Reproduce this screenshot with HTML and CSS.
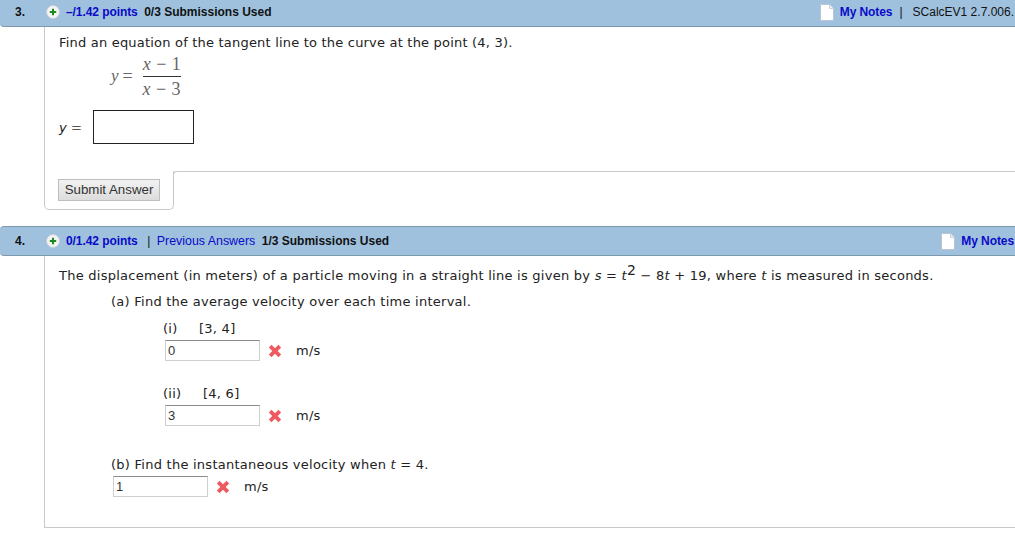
FILE: index.html
```html
<!DOCTYPE html>
<html lang="en">
<head>
<meta charset="utf-8">
<title>Questions</title>
<link rel="stylesheet" href="styles.css">
</head>
<body>
<section class="question first">
  <header class="qhead qhead-first">
    <span class="num">3.</span>
    <svg class="plus" viewBox="0 0 14 14"><circle cx="7" cy="7" r="6.5" fill="#f3f3f3" stroke="#c4cfd8"/><path d="M7 3.8v6.4M3.8 7h6.4" stroke="#1c8a1c" stroke-width="2"/></svg>
    <span class="pts">–/1.42 points</span>
    <span class="subs">0/3 Submissions Used</span>
    <span class="right">
      <svg class="note" viewBox="0 0 14 17"><path d="M.5.5h9l4 4v12H.5z" fill="#fff" stroke="#b9c6d2"/><path d="M9.5.5v4h4" fill="#eee" stroke="#ccd4db"/></svg>
      <span class="pts notes">My Notes</span>
      <span class="bar">|</span>
      <span class="ref">SCalcEV1 2.7.006.</span>
    </span>
  </header>
  <div class="qbody q3">
    <p class="text narrow">Find an equation of the tangent line to the curve at the point (4, 3).</p>
    <div class="math">
      <i>y</i><span class="eq">=</span>
      <span class="frac"><span class="top"><i>x</i> − 1</span><span class="bot"><i>x</i> − 3</span></span>
    </div>
    <div class="answer-row"><i>y</i><span class="eqs">=</span><span class="bigbox"></span></div>
  </div>
  <div class="foot">
    <div class="foot-left"><button class="submit" type="button">Submit Answer</button></div>
    <div class="foot-right"></div>
  </div>
</section>

<section class="question second">
  <header class="qhead">
    <span class="num">4.</span>
    <svg class="plus" viewBox="0 0 14 14"><circle cx="7" cy="7" r="6.5" fill="#f3f3f3" stroke="#c4cfd8"/><path d="M7 3.8v6.4M3.8 7h6.4" stroke="#1c8a1c" stroke-width="2"/></svg>
    <span class="pts">0/1.42 points</span>
    <span class="bar bar2">|</span>
    <span class="prev">Previous Answers</span>
    <span class="subs">1/3 Submissions Used</span>
    <span class="right">
      <svg class="note" viewBox="0 0 14 17"><path d="M.5.5h9l4 4v12H.5z" fill="#fff" stroke="#b9c6d2"/><path d="M9.5.5v4h4" fill="#eee" stroke="#ccd4db"/></svg>
      <span class="pts notes">My Notes</span>
    </span>
  </header>
  <div class="qbody q4">
    <p class="text">The displacement (in meters) of a particle moving in a straight line is given by <i>s</i> = <i>t</i><sup>2</sup> − 8<i>t</i> + 19, where <i>t</i> is measured in seconds.</p>
    <p class="text part">(a) Find the average velocity over each time interval.</p>
    <div class="sub">
      <div class="sublabel"><span class="roman">(i)</span><span>[3, 4]</span></div>
      <div class="resp">
        <span class="field">0</span>
        <svg class="x" viewBox="0 0 14 14"><path d="M2.2 2.2l9.6 9.6M11.8 2.2l-9.6 9.6" stroke="#ee5a5f" stroke-width="3.8"/></svg>
        <span class="unit">m/s</span>
      </div>
    </div>
    <div class="sub sub2">
      <div class="sublabel"><span class="roman">(ii)</span><span>[4, 6]</span></div>
      <div class="resp">
        <span class="field">3</span>
        <svg class="x" viewBox="0 0 14 14"><path d="M2.2 2.2l9.6 9.6M11.8 2.2l-9.6 9.6" stroke="#ee5a5f" stroke-width="3.8"/></svg>
        <span class="unit">m/s</span>
      </div>
    </div>
    <p class="text part partb">(b) Find the instantaneous velocity when <i>t</i> = 4.</p>
    <div class="resp respb">
      <span class="field">1</span>
      <svg class="x" viewBox="0 0 14 14"><path d="M2.2 2.2l9.6 9.6M11.8 2.2l-9.6 9.6" stroke="#ee5a5f" stroke-width="3.8"/></svg>
      <span class="unit">m/s</span>
    </div>
  </div>
</section>
</body>
</html>
```
FILE: styles.css
```css
html, body { margin: 0; padding: 0; background: #fff; overflow: hidden; }
body { width: 1015px; height: 553px; font-family: "DejaVu Sans", Verdana, sans-serif; font-size: 13px; color: #222; letter-spacing: 0.25px; }
p { margin: 0; }

.qhead {
  box-sizing: border-box;
  height: 30px;
  display: flex;
  align-items: center;
  background: #9fc1de;
  border-top: 1px solid #7d99ae;
  border-bottom: 1px solid #7d99ae;
  border-radius: 0 0 0 4px;
  font-family: "Liberation Sans", Arial, sans-serif;
  font-size: 12px;
  font-weight: bold;
  color: #111;
  white-space: nowrap;
  letter-spacing: 0;
}
.qhead-first { height: 27px; border-top: 0; padding-bottom: 2px; }
.second .qhead { border-radius: 4px 0 0 4px; }
.second { margin-top: 16px; }

.num { width: 46px; padding-left: 15px; box-sizing: border-box; }
.plus { width: 14px; height: 14px; margin-right: 6px; }
.pts { color: #0a0ac8; letter-spacing: -0.08px; }
.subs { margin-left: 6.5px; }
.bar { font-weight: normal; }
.bar2 { margin-left: 9.5px; }
.prev { margin-left: 6.5px; font-weight: normal; font-size: 12.4px; color: #0a0ac8; }
.right { margin-left: auto; margin-right: 1px; display: flex; align-items: center; }
.second .right { margin-right: 0; }
.note { width: 14px; height: 17px; margin-right: 6px; }
.notes { margin-right: 1px; }
.right .bar { margin-left: 6px; }
.ref { margin-left: 10px; font-weight: normal; }

.qbody { margin-left: 44px; border-left: 1px solid #c8c8c8; padding-left: 14px; }
.q3 { height: 144px; box-sizing: border-box; padding-top: 8px; }
.text { line-height: 16px; }
.narrow { letter-spacing: 0.2px; }

.math {
  display: flex;
  align-items: center;
  margin: 4px 0 0 52px;
  font-family: "Liberation Serif", serif;
  font-size: 17px;
  color: #666;
  height: 42px;
  letter-spacing: 0;
}
.eq { margin: 0 10px 0 4px; font-size: 18px; }
.frac { display: flex; flex-direction: column; align-items: center; text-align: center; width: 38px; font-size: 18px; letter-spacing: 0.5px; white-space: nowrap; }
.top { border-bottom: 1px solid #333; width: 100%; padding-bottom: 3px; line-height: 18px; }
.bot { padding-top: 3px; line-height: 18px; }

.answer-row { display: flex; align-items: center; margin-top: 13px; height: 34px; font-size: 13px; }
.eqs { margin-left: 4px; color: #555; }
.bigbox { box-sizing: border-box; width: 101px; height: 34px; margin-left: 11px; border: 1px solid #222; background: #fff; }

.foot { display: flex; }
.foot-left {
  box-sizing: border-box;
  width: 130px;
  height: 39px;
  margin-left: 44px;
  padding: 8px 0 0 13px;
  border: 1px solid #c8c8c8;
  border-top: 0;
  border-radius: 0 0 5px 5px;
}
.foot-right { flex: 1; margin-left: -1px; height: 20px; border-top: 1px solid #c8c8c8; border-left: 1px solid #c8c8c8; border-radius: 4px 0 0 0; }
.submit {
  box-sizing: border-box;
  width: 102px;
  height: 22px;
  padding: 0 0 2px;
  font-family: "Liberation Sans", Arial, sans-serif;
  font-size: 13.3px;
  color: #333;
  background: linear-gradient(#f2f2f2, #dcdcdc);
  border: 1px solid #bdbdbd;
  border-radius: 0;
}

.q4 { box-sizing: border-box; height: 272px; padding-top: 12px; border-bottom: 1px solid #c8c8c8; }
sup { font-size: 14px; line-height: 0; position: relative; top: 0; }
.part { margin: 10px 0 0 52px; }
.sub { margin: 11px 0 0 104px; }
.sub2 { margin-top: 25px; }
.sublabel { display: flex; line-height: 16px; }
.roman { width: 36px; }
.sub2 .roman { width: 40px; }
.resp { display: flex; align-items: center; margin-top: 3px; }
.sub .resp { margin-left: 2px; }
.field {
  box-sizing: border-box;
  width: 95px;
  height: 21px;
  padding-left: 2px;
  line-height: 19px;
  font-family: "Liberation Sans", Arial, sans-serif;
  font-size: 13px;
  color: #333;
  background: #fff;
  border: 1px solid #cfcfcf;
  border-top-color: #8a8a8a;
}
.x { width: 14px; height: 14px; margin: 1px 14px 0 8px; }
.partb { margin-top: 31px; }
.respb { margin: 3px 0 0 54px; }
```
